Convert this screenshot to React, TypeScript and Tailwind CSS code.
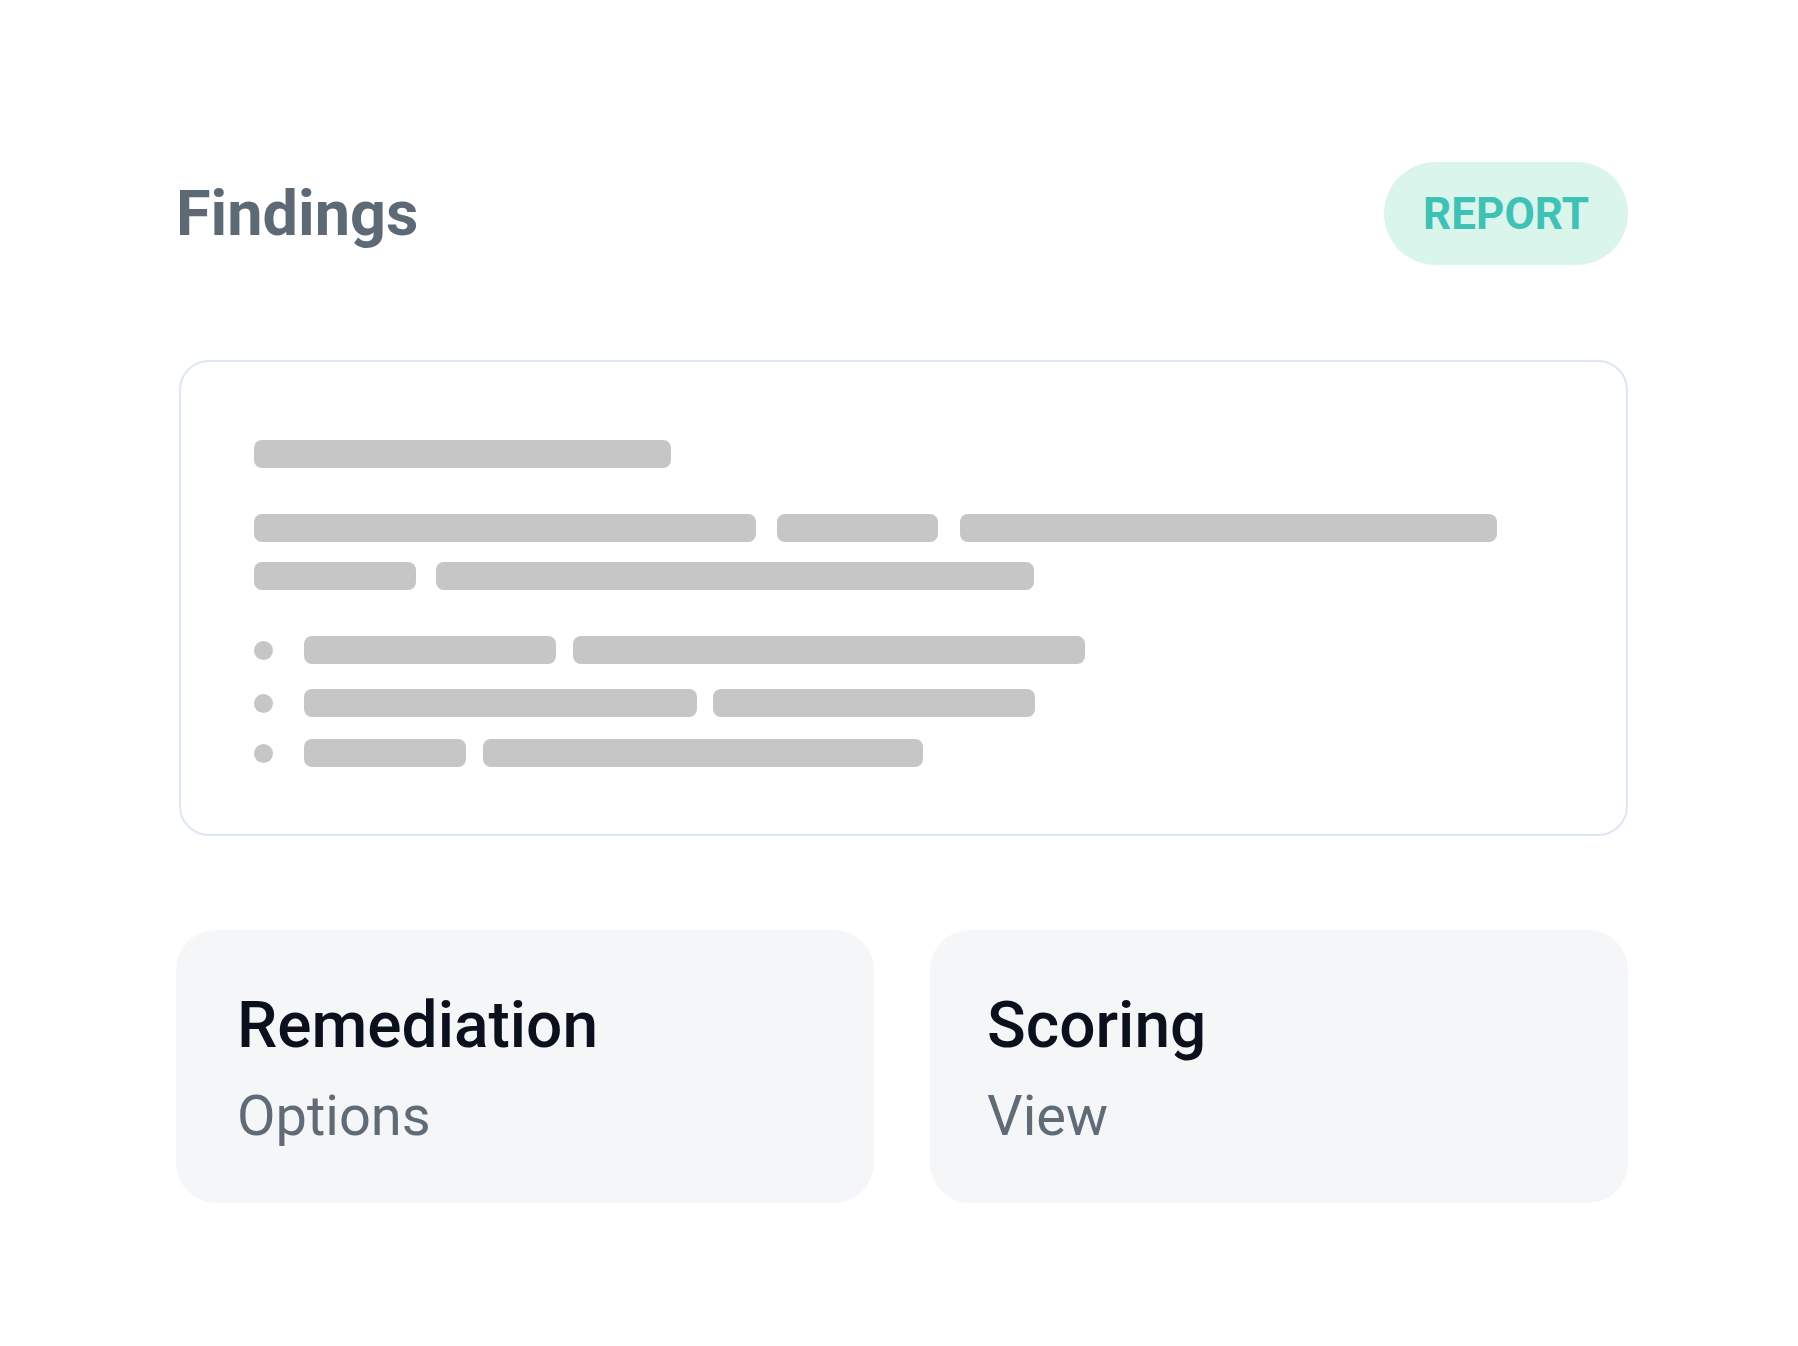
import React from "react";

type Bar = { w: number; gap?: number };

const font = { fontFamily: "Roboto, 'Noto Sans', 'Liberation Sans', sans-serif" };

function SkeletonRow({ bars, className = "" }: { bars: Bar[]; className?: string }) {
  return (
    <div className={`flex items-center ${className}`}>
      {bars.map((b, i) => (
        <div
          key={i}
          className="h-[28px] rounded-lg bg-[#c6c6c6] shrink-0"
          style={{ width: b.w, marginLeft: i === 0 ? 0 : b.gap ?? 20 }}
        />
      ))}
    </div>
  );
}

function BulletRow({ bars, className = "" }: { bars: Bar[]; className?: string }) {
  return (
    <div className={`flex items-center ${className}`}>
      <div className="w-[19px] h-[19px] rounded-full bg-[#c6c6c6] shrink-0" />
      <SkeletonRow bars={bars} className="ml-[31px]" />
    </div>
  );
}

function ActionCard({ title, subtitle, className = "" }: { title: string; subtitle: string; className?: string }) {
  return (
    <div className={`w-[698px] h-[273px] rounded-[40px] bg-[#f4f6f8] pt-[64px] ${className}`}>
      <div className="text-[64px] leading-none font-medium text-[#0a101c]">{title}</div>
      <div className="mt-[30px] text-[56px] leading-none font-normal text-[#5f6b77]">{subtitle}</div>
    </div>
  );
}

export default function App() {
  return (
    <div className="min-h-[1346px] w-full bg-white" style={font}>
      <div className="ml-[176px] w-[1452px] pt-[162px]">
        <div className="flex items-center justify-between h-[103px]">
          <h1 className="text-[63px] leading-none font-bold text-[#5d6a76]">Findings</h1>
          <div className="w-[244px] h-[103px] rounded-full bg-[#daf5ec] flex items-center justify-center">
            <span className="text-[44px] leading-none font-bold text-[#3fc1b5]">REPORT</span>
          </div>
        </div>

        <div className="mt-[95px] ml-[3px] h-[476px] rounded-[30px] border-2 border-[#dde7f2] bg-white pl-[73px] pt-[78px]">
          <SkeletonRow bars={[{ w: 417 }]} />
          <SkeletonRow className="mt-[46px]" bars={[{ w: 502 }, { w: 161, gap: 21 }, { w: 537, gap: 22 }]} />
          <SkeletonRow className="mt-[20px]" bars={[{ w: 162 }, { w: 598, gap: 20 }]} />
          <BulletRow className="mt-[46px]" bars={[{ w: 252 }, { w: 512, gap: 17 }]} />
          <BulletRow className="mt-[25px]" bars={[{ w: 393 }, { w: 322, gap: 16 }]} />
          <BulletRow className="mt-[22px]" bars={[{ w: 162 }, { w: 440, gap: 17 }]} />
        </div>

        <div className="mt-[94px] flex justify-between">
          <ActionCard title="Remediation" subtitle="Options" className="pl-[61px]" />
          <ActionCard title="Scoring" subtitle="View" className="pl-[57px]" />
        </div>
      </div>
    </div>
  );
}
